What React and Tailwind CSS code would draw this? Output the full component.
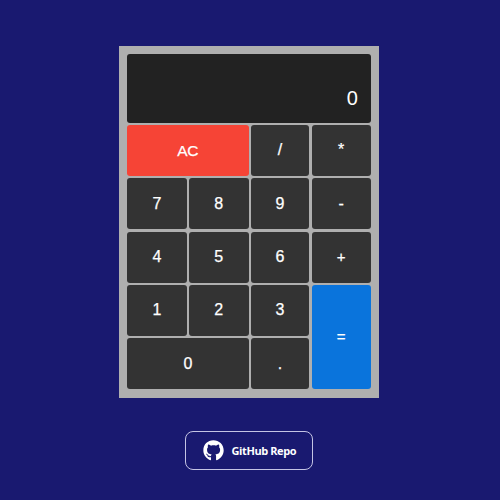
import { FaGithub } from "react-icons/fa";

const keys = [
  { label: "AC", style: "col-span-2 bg-[#f64436] text-[15.5px]" },
  { label: "/" },
  { label: "*" },
  { label: "7" },
  { label: "8" },
  { label: "9" },
  { label: "-" },
  { label: "4" },
  { label: "5" },
  { label: "6" },
  { label: "+", style: "bg-[#333333] text-[15px]" },
  { label: "1" },
  { label: "2" },
  { label: "3" },
  { label: "=", style: "row-span-2 bg-[#0a74dc] text-[15px]" },
  { label: "0", style: "col-span-2 bg-[#333333] text-[16px]" },
  { label: "." },
];

function Key({ label, style = "bg-[#333333] text-[16px]" }) {
  return (
    <button className={`flex items-center justify-center rounded-[3px] pr-[0.6px] pb-[0.6px] tracking-[-0.4px] text-white [-webkit-text-stroke:0.25px_white] ${style}`}>
      {label}
    </button>
  );
}

export default function App() {
  return (
    <div className="flex h-[500px] w-[500px] flex-col items-center overflow-hidden bg-[#191970] pt-[46px] pr-[2px] font-['Liberation_Sans',Arial,sans-serif]">
      <main className="grid h-[351.5px] w-[260px] shrink-0 grid-cols-[59.4px_59.4px_58.4px_59.2px] grid-rows-[68.5px_repeat(5,1fr)] gap-[2.4px] bg-[#afafaf] py-[8.2px] pl-[8.4px]">
        <output className="col-span-4 flex items-end justify-end rounded-[3px] bg-[#222222] pr-[13px] pb-[13px] text-[20px] leading-[24px] text-white">
          0
        </output>
        {keys.map((key) => (
          <Key key={key.label} {...key} />
        ))}
      </main>
      <button className="mt-[33.5px] flex h-[39px] w-[128px] shrink-0 items-center rounded-[8px] border border-[#c4c4e4] pl-[17px] text-white">
        <FaGithub className="size-[21px] shrink-0" />
        <span className="ml-[7.5px] mt-[1px] whitespace-nowrap font-['Open_Sans','Noto_Sans',sans-serif] text-[11px] font-bold tracking-[-0.4px]">
          GitHub Repo
        </span>
      </button>
    </div>
  );
}
